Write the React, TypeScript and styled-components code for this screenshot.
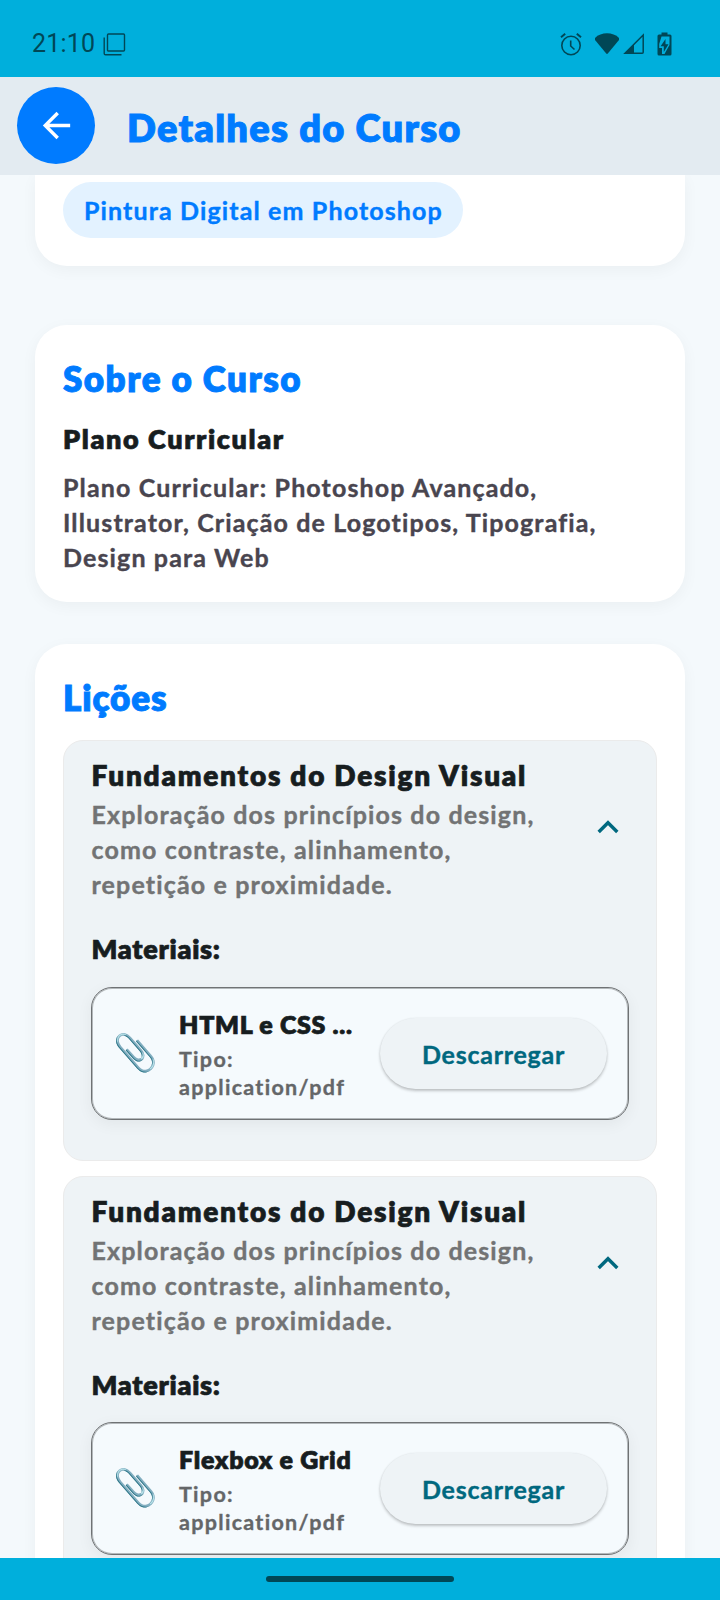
import React from 'react';
import styled, { createGlobalStyle } from 'styled-components';

const ink = '#004756';

const GlobalStyle = createGlobalStyle`
  * { box-sizing: border-box; }
  body {
    margin: 0;
    background: #f4f9fc;
    font-family: Lato, "Noto Sans", sans-serif;
    font-weight: 700;
  }
`;

const Screen = styled.div`
  width: 720px;
  height: 1600px;
  display: flex;
  flex-direction: column;
  overflow: hidden;
  background: #f4f9fc;
`;

const StatusBar = styled.div`
  flex: none;
  height: 77px;
  padding: 11px 48px 0 32px;
  display: flex;
  align-items: center;
  background: #00afdc;
  color: ${ink};
`;

const Clock = styled.span`
  font: 400 25px/30px Roboto, sans-serif;
  letter-spacing: 0.2px;
  width: 71px;
`;

const StatusIcons = styled.div`
  margin-left: auto;
  display: flex;
  align-items: center;
`;

const StatusIcon = styled.svg<{ $gap?: number }>`
  display: block;
  margin-left: ${({ $gap = 0 }) => $gap}px;
`;

const Header = styled.header`
  flex: none;
  height: 98px;
  padding-left: 17px;
  display: flex;
  align-items: center;
  gap: 32px;
  background: #e3ebf1;
`;

const BackButton = styled.button`
  width: 78px;
  height: 77px;
  margin-bottom: 1px;
  padding: 0;
  border: 0;
  border-radius: 50%;
  display: grid;
  place-items: center;
  background: #007bff;
`;

const Title = styled.h1`
  margin: 2px 0 0;
  font-size: 38px;
  line-height: 46px;
  font-weight: 800;
  letter-spacing: 1.25px;
  -webkit-text-stroke: 0.9px currentColor;
  color: #007bff;
`;

const Content = styled.main`
  flex: 1;
  min-height: 0;
  overflow: hidden;
  padding: 0 35px;
`;

const Card = styled.section<{ $space?: number }>`
  margin-top: ${({ $space = 0 }) => $space}px;
  padding: 28px 28px 26.5px;
  border-radius: 32px;
  background: #fff;
  box-shadow: 0 4px 16px rgba(0, 0, 0, 0.045);
`;

const TagCard = styled(Card)`
  height: 91px;
  padding-top: 7px;
  border-radius: 0 0 32px 32px;
`;

const Tag = styled.span`
  display: inline-flex;
  align-items: center;
  width: 400px;
  height: 56px;
  padding-left: 21px;
  border-radius: 28px;
  background: #e3f2ff;
  color: #007bff;
  font-size: 25px;
  letter-spacing: 1.13px;
  -webkit-text-stroke: 0.4px currentColor;
  white-space: nowrap;
`;

const SectionTitle = styled.h2<{ $tracking: number }>`
  margin: 0 0 17px;
  font-size: 35px;
  line-height: 51px;
  font-weight: 800;
  letter-spacing: ${({ $tracking }) => $tracking}px;
  -webkit-text-stroke: 0.9px currentColor;
  color: #007bff;
`;

const Subtitle = styled.h3`
  margin: 0 0 13px;
  font-size: 27px;
  line-height: 36px;
  font-weight: 800;
  letter-spacing: 1.6px;
  -webkit-text-stroke: 0.7px currentColor;
  color: #171d1f;
`;

const Paragraph = styled.p`
  margin: 0;
  font-size: 25px;
  line-height: 35px;
  letter-spacing: 1.13px;
  -webkit-text-stroke: 0.4px currentColor;
  color: #49454f;
`;

const LessonList = styled.div`
  display: flex;
  flex-direction: column;
  gap: 15px;
`;

const LessonCard = styled.article`
  height: 420.5px;
  padding: 16px 27px 0;
  border: 1px solid #ebebeb;
  border-radius: 20px;
  background: #eef3f6;
`;

const LessonHeader = styled.div`
  display: flex;
  justify-content: space-between;
  align-items: center;
`;

const LessonText = styled.div`
  width: 460px;
  padding-left: 0.5px;
`;

const LessonTitle = styled.h3`
  margin: 0 0 3px;
  font-size: 28px;
  line-height: 37px;
  font-weight: 800;
  letter-spacing: 1.74px;
  -webkit-text-stroke: 0.7px currentColor;
  white-space: nowrap;
  color: #171d1f;
`;

const LessonDescription = styled(Paragraph)`
  letter-spacing: 1.14px;
  color: #727374;
`;

const Chevron = styled.svg`
  flex: none;
  margin: -5px 3px 0 0;
`;

const MaterialsLabel = styled.h4`
  margin: 29px 0 19.5px 0.5px;
  font-size: 27px;
  line-height: 36px;
  font-weight: 800;
  letter-spacing: 0.72px;
  -webkit-text-stroke: 0.7px currentColor;
  color: #171d1f;
`;

const MaterialCard = styled.div`
  height: 133px;
  padding: 0 21px;
  display: flex;
  align-items: center;
  border: 1px solid #6f7274;
  border-radius: 21px;
  background: #f5fafd;
  box-shadow: inset 0 0 0 1px rgba(100, 104, 106, 0.45), 0 4px 16px rgba(0, 0, 0, 0.055);
`;

const Clip = styled.span`
  flex: none;
  width: 66px;
  margin-top: -5px;
  font-size: 36px;
  line-height: 44px;
`;

const MaterialText = styled.div`
  flex: 1;
  min-width: 0;
  margin-top: 1px;
`;

const MaterialName = styled.div`
  margin-bottom: 3px;
  font-size: 25px;
  line-height: 35px;
  font-weight: 800;
  letter-spacing: 0.7px;
  -webkit-text-stroke: 0.7px currentColor;
  white-space: nowrap;
  color: #171d1f;
`;

const MaterialType = styled.div`
  width: 175px;
  font-size: 21.5px;
  line-height: 28px;
  letter-spacing: 1.3px;
  -webkit-text-stroke: 0.35px currentColor;
  color: #646668;
`;

const DownloadButton = styled.button`
  flex: none;
  width: 227px;
  height: 71px;
  padding: 1px 0 0;
  border: 0;
  border-radius: 36px;
  background: #eef3f6;
  box-shadow: 0 2px 3px rgba(0, 0, 0, 0.22), 0 0 2px rgba(0, 0, 0, 0.08);
  font: 700 25px Lato, sans-serif;
  letter-spacing: 0.75px;
  -webkit-text-stroke: 0.4px currentColor;
  color: #00687f;
`;

const NavigationBar = styled.div`
  flex: none;
  height: 42px;
  display: flex;
  justify-content: center;
  align-items: center;
  background: #00afdc;
`;

const HomeHandle = styled.div`
  width: 188px;
  height: 6px;
  border-radius: 3px;
  background: ${ink};
`;

const lessons = [
  { id: 1, material: 'HTML e CSS ...' },
  { id: 2, material: 'Flexbox e Grid' },
];

function Lesson({ material }: { material: string }) {
  return (
    <LessonCard>
      <LessonHeader>
        <LessonText>
          <LessonTitle>Fundamentos do Design Visual</LessonTitle>
          <LessonDescription>
            Exploração dos princípios do design, como contraste, alinhamento, repetição e proximidade.
          </LessonDescription>
        </LessonText>
        <Chevron width="36" height="36" viewBox="0 0 36 36" fill="none" stroke="#00687f" strokeWidth="3.4">
          <path d="M8.7 23 18 13.7 27.3 23" />
        </Chevron>
      </LessonHeader>
      <MaterialsLabel>Materiais:</MaterialsLabel>
      <MaterialCard>
        <Clip>📎</Clip>
        <MaterialText>
          <MaterialName>{material}</MaterialName>
          <MaterialType>Tipo: application/pdf</MaterialType>
        </MaterialText>
        <DownloadButton>Descarregar</DownloadButton>
      </MaterialCard>
    </LessonCard>
  );
}

export default function App() {
  return (
    <Screen>
      <GlobalStyle />
      <StatusBar>
        <Clock>21:10</Clock>
        <StatusIcon width="23" height="23" viewBox="0 0 23 23" fill="none" stroke={ink} strokeWidth="1.4">
          <rect x="4.5" y="1" width="17" height="17" rx="1" />
          <path d="M1.2 4.5V20.5Q1.2 21.8 2.5 21.8H18.5" />
        </StatusIcon>
        <StatusIcons>
          <StatusIcon width="22" height="24" viewBox="0 0 22 24" fill="none" stroke={ink} strokeWidth="1.6">
            <circle cx="11" cy="13.5" r="9.2" />
            <path d="M10.7 8.5V14L14.5 17.5" />
            <path d="M1 5.2 5.2 1.8M21 5.2 16.8 1.8" strokeWidth="2" />
          </StatusIcon>
          <StatusIcon $gap={13} width="24" height="22" viewBox="0 0 24 22" fill={ink}>
            <path d="M0 5C3 1.8 7.5.3 12 .3S21 1.8 24 5V7L13 20.3Q12 21.5 11 20.3L0 7Z" />
          </StatusIcon>
          <StatusIcon $gap={4} width="22" height="22" viewBox="0 0 22 22" fill="none" stroke={ink} strokeWidth="1.5">
            <path d="M2 20.2 20.2 2V19.2Q20.2 20.2 19.2 20.2Z" />
            <path d="M1 21 11 11V21Z" fill={ink} stroke="none" />
          </StatusIcon>
          <StatusIcon $gap={12} width="15" height="24" viewBox="0 0 15 24">
            <path fill={ink} d="M4.5 .5H10.5V2.5H13Q14.5 2.5 14.5 4V22Q14.5 23.5 13 23.5H2Q.5 23.5 .5 22V4Q.5 2.5 2 2.5H4.5Z" />
            <path fill="#00afdc" d="M4.5 4.5H12.5V13L7.5 22H5V16H2.2V12Z" />
            <path fill={ink} d="M8.5 7 3.6 14.2H6.8V20L11.5 12.2H8.5Z" />
          </StatusIcon>
        </StatusIcons>
      </StatusBar>
      <Header>
        <BackButton aria-label="Voltar">
          <svg width="41" height="41" viewBox="0 0 24 24" fill="#fff">
            <path d="M20 11H7.83l5.59-5.59L12 4l-8 8 8 8 1.41-1.41L7.83 13H20v-2z" />
          </svg>
        </BackButton>
        <Title>Detalhes do Curso</Title>
      </Header>
      <Content>
        <TagCard>
          <Tag>Pintura Digital em Photoshop</Tag>
        </TagCard>
        <Card $space={59}>
          <SectionTitle $tracking={1.45}>Sobre o Curso</SectionTitle>
          <Subtitle>Plano Curricular</Subtitle>
          <Paragraph>
            Plano Curricular: Photoshop Avançado, Illustrator, Criação de Logotipos, Tipografia, Design para Web
          </Paragraph>
        </Card>
        <Card $space={42.5}>
          <SectionTitle $tracking={0.85}>Lições</SectionTitle>
          <LessonList>
            {lessons.map((lesson) => (
              <Lesson key={lesson.id} material={lesson.material} />
            ))}
          </LessonList>
        </Card>
      </Content>
      <NavigationBar>
        <HomeHandle />
      </NavigationBar>
    </Screen>
  );
}
